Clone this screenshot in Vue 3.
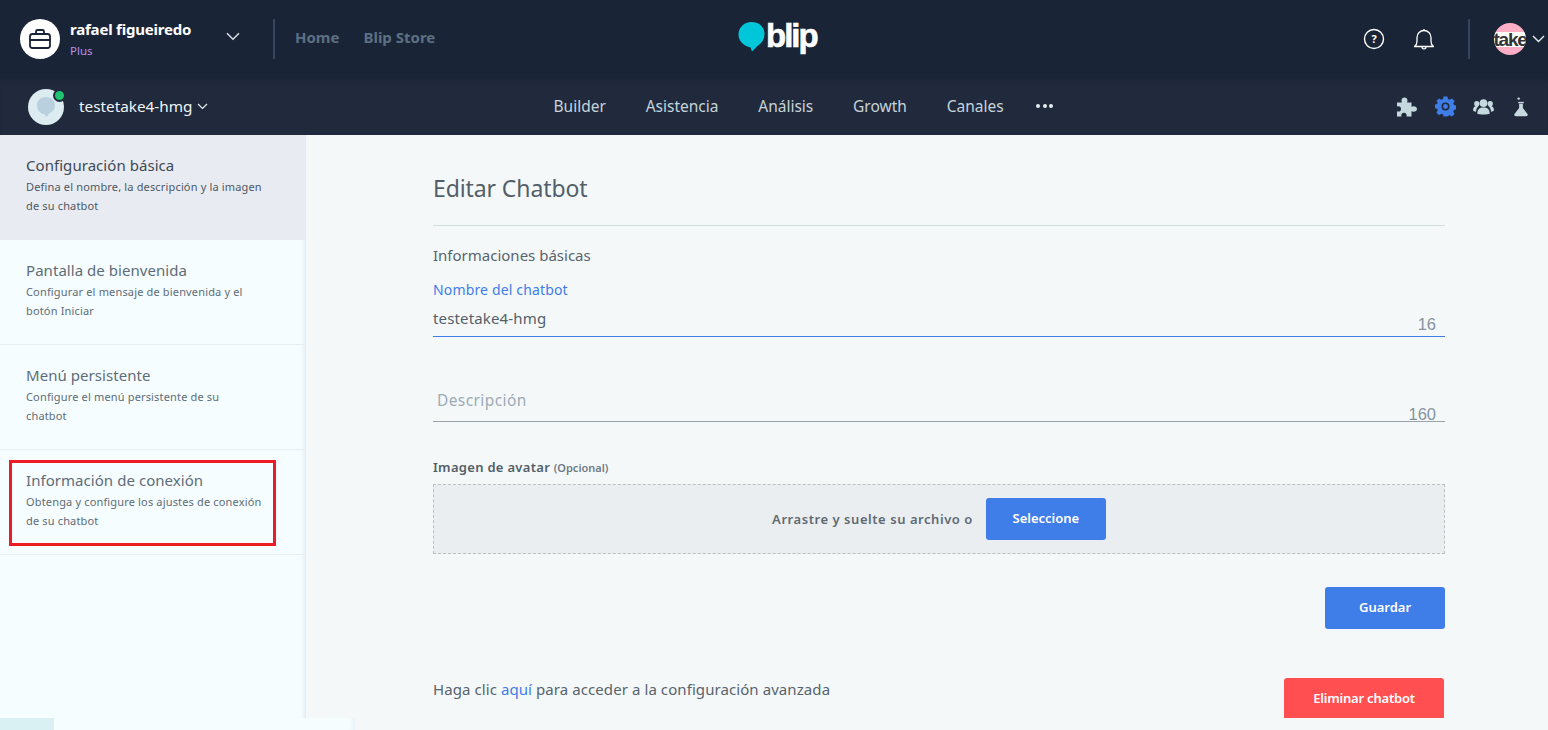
<script setup>
const items = [
  { t: 'Configuración básica', d: 'Defina el nombre, la descripción y la imagen\nde su chatbot', active: true },
  { t: 'Pantalla de bienvenida', d: 'Configurar el mensaje de bienvenida y el\nbotón Iniciar' },
  { t: 'Menú persistente', d: 'Configure el menú persistente de su\nchatbot' },
  { t: 'Información de conexión', d: 'Obtenga y configure los ajustes de conexión\nde su chatbot', marked: true }
]
const nav = ['Builder', 'Asistencia', 'Análisis', 'Growth', 'Canales']
</script>

<template>
  <div class="page">
    <header class="top">
      <div class="account">
        <div class="brief">
          <svg width="24" height="22" viewBox="0 0 24 22" fill="none" stroke="#1a2437" stroke-width="1.8" stroke-linejoin="round" stroke-linecap="round">
            <rect x="2" y="6" width="20" height="14" rx="2.5" />
            <path d="M8 6V3.5A1.5 1.5 0 0 1 9.5 2h5A1.5 1.5 0 0 1 16 3.5V6M2 12h20" />
          </svg>
        </div>
        <div class="who">
          <div class="name">rafael figueiredo</div>
          <div class="plan">Plus</div>
        </div>
        <svg class="acc-chev" width="14" height="9" viewBox="0 0 14 9" fill="none" stroke="#d5dde4" stroke-width="1.6"><path d="M1 1.2l6 6 6-6" /></svg>
      </div>
      <div class="vline"></div>
      <nav class="toplinks"><span>Home</span><span>Blip Store</span></nav>
      <div class="logo">
        <svg width="27" height="31" viewBox="0 0 27 31"><path d="M13.5 1C6 1 .5 6.500 .5 13.500S6 25 12.500 26.500L14 30.500 20 24.500C24 22 26.500 18 26.500 13C26.500 6 21 1 13.500 1Z" fill="#00c6d9" /></svg>
        <span class="logotext">blip</span>
      </div>
      <div class="tools">
        <svg width="22" height="22" viewBox="0 0 22 22" fill="none" stroke="#fff" stroke-width="1.4"><circle cx="11" cy="11" r="9.500" /><text x="11" y="15.200" text-anchor="middle" class="qmark">?</text></svg>
        <svg class="bell" width="22" height="22" viewBox="0 0 22 22" fill="none" stroke="#fff" stroke-width="1.3" stroke-linejoin="round"><path d="M1.500 18.500h19c-1.600-1.200-2.500-2.500-2.500-5V9.500a7 7 0 0 0-14 0v4c0 2.500-.9 3.800-2.500 5Z" /><path d="M9 19c0 2.500 4 2.500 4 0M11 2.500V1" /></svg>
        <div class="vline small"></div>
        <div class="avatar"><span>take</span></div>
        <svg class="chev" width="13" height="8" viewBox="0 0 13 8" fill="none" stroke="#e8edf1" stroke-width="1.4"><path d="M1 1l5.500 5.500L12 1" /></svg>
      </div>
    </header>

    <div class="sub">
      <div class="bot">
        <div class="botpic">
          <svg width="20" height="22" viewBox="0 0 20 22"><path d="M10 1C4.500 1 1 4.500 1 9.500S4.500 17.500 8.500 18.500L11 21 13 17.500C17 16 19 13 19 9.500 19 4.500 15.500 1 10 1Z" fill="#b9d1de" /></svg>
          <i class="dot"></i>
        </div>
        <span class="botname">testetake4-hmg</span>
        <svg width="11" height="7" viewBox="0 0 11 7" fill="none" stroke="#e8edf1" stroke-width="1.2"><path d="M1 1l4.500 4.500L10 1" /></svg>
      </div>
      <nav class="subnav">
        <span v-for="n in nav" :key="n">{{ n }}</span>
        <span class="dots"><i></i><i></i><i></i></span>
      </nav>
      <div class="subicons">
        <svg width="22" height="20" viewBox="0 0 22 20" fill="#c5d9de"><path d="M1 5.500h5C5 3.500 5.500 .5 8.500 .5S12 3.500 11 5.500h4.500v4.300c2-1 5.500-.6 5.500 2.200s-3.500 3.300-5.500 2.300v5.200H10.500c.8-2-.5-3.800-2.500-3.800s-3.300 1.800-2.500 3.800H1v-5.300c2 .9 4 0 4-2.300s-2-3.200-4-2.300Z" /></svg>
        <svg class="gear" width="21" height="21" viewBox="0 0 22 22"><path fill="#3f7de8" fill-rule="evenodd" d="M9 .5h4l.6 2.700 1.800.8L17.800 2.500l2.800 2.800-1.500 2.400.8 1.800 2.100.5v4l-2.100.6-.8 1.800 1.500 2.400-2.800 2.800-2.400-1.500-1.800.8L13 21.500H9l-.6-2.100-1.800-.8-2.400 1.500-2.800-2.800 1.500-2.400-.8-1.800L0 13V9l2.100-.5.800-1.800L1.400 5.300 4.200 2.500l2.400 1.500 1.800-.8ZM11 6.800a4.200 4.200 0 1 0 0 8.400 4.200 4.200 0 0 0 0-8.400Z" /><circle cx="11" cy="11" r="2.500" fill="#3f7de8" /></svg>
        <svg class="users" width="21" height="17" viewBox="0 0 22 17" fill="#c5d9de"><circle cx="11" cy="5" r="4" /><path d="M4.500 16c0-5 2.500-6.500 6.500-6.500s6.500 1.500 6.500 6.500c-2 1-11 1-13 0Z" /><circle cx="4" cy="5.500" r="2.800" /><circle cx="18" cy="5.500" r="2.800" /><path d="M0 12.500c0-3 1.500-4.500 4-4.500 .6 0 1.200.1 1.600.3C4 10 3.300 11.500 3.200 14 1.500 14 .3 13.300 0 12.500ZM22 12.500c0-3-1.500-4.500-4-4.500-.6 0-1.200.1-1.600.3C18 10 18.700 11.500 18.800 14c1.700 0 2.900-.7 3.200-1.500Z" /></svg>
        <svg class="flask" width="14" height="20" viewBox="0 0 15 21" fill="#c5d9de"><circle cx="5" cy="1.500" r="1.300" /><rect x="4.500" y="5" width="6" height="1.500" /><path d="M5.500 7h4v4.500L14.500 18c.6 1.200 0 2.500-1.500 2.500H2C.5 20.500-.1 19.200.5 18l5-6.500Z" /></svg>
      </div>
    </div>

    <div class="body">
      <aside class="side">
        <div v-for="it in items" :key="it.t" class="item" :class="{ active: it.active }">
          <div class="it-title">{{ it.t }}</div>
          <div class="it-desc">{{ it.d }}</div>
          <div v-if="it.marked" class="mark"></div>
        </div>
      </aside>
      <main class="main">
        <h1>Editar Chatbot</h1>
        <h2>Informaciones básicas</h2>
        <div class="field focus">
          <label>Nombre del chatbot</label>
          <div class="value">testetake4-hmg</div>
          <span class="count">16</span>
        </div>
        <div class="field desc">
          <div class="ph">Descripción</div>
          <span class="count">160</span>
        </div>
        <div class="av-label">Imagen de avatar <small>(Opcional)</small></div>
        <div class="drop">
          <span>Arrastre y suelte su archivo o</span>
          <button class="btn blue">Seleccione</button>
        </div>
        <div class="save"><button class="btn blue">Guardar</button></div>
        <div class="foot">
          <span class="adv">Haga clic <a>aquí</a> para acceder a la configuración avanzada</span>
          <button class="btn red">Eliminar chatbot</button>
        </div>
      </main>
    </div>
    <div class="strip"><i class="s1"></i><i class="s2"></i></div>
  </div>
</template>

<style>
html, body { margin: 0; background: #f5f8f9; }
</style>

<style scoped>
* { box-sizing: border-box; }
.page { width: 1548px; height: 730px; overflow: hidden; display: flex; flex-direction: column; background: #f5f8f9; font-family: "Noto Sans", "Open Sans", sans-serif; color: #52636c; }
.top { height: 78px; flex: none; background: #1a2437; display: flex; align-items: flex-start; padding-top: 19px; position: relative; }
.account { display: flex; align-items: flex-start; padding-left: 20px; width: 273px; height: 40px; }
.brief { width: 40px; height: 40px; border-radius: 50%; background: #fff; display: flex; align-items: center; justify-content: center; flex: none; }
.who { margin-left: 10px; width: 146px; }
.name { font-size: 15px; font-weight: 700; color: #fff; line-height: 21px; letter-spacing: -.2px; white-space: nowrap; }
.plan { font-size: 11.500px; color: #b98fe8; line-height: 20px; margin-top: 1px; }
.acc-chev { margin-left: 10px; margin-top: 13px; }
.vline { width: 2px; height: 40px; background: #35455f; flex: none; }
.vline.small { margin-left: 33px; }
.toplinks { display: flex; gap: 24px; margin-left: 20px; font-size: 15px; font-weight: 700; color: #5d7083; line-height: 37px; }
.logo { position: absolute; left: 738px; top: 21px; display: flex; align-items: center; }
.logotext { font-family: "Liberation Sans", sans-serif; font-weight: 700; font-size: 33px; line-height: 30px; letter-spacing: -2px; color: #fff; margin-left: 1px; margin-top: -1px; -webkit-text-stroke: .6px #fff; }
.tools { margin-left: auto; display: flex; align-items: center; height: 40px; padding-right: 3px; }
.qmark { font: 700 11px "Noto Sans", sans-serif; fill: #fff; stroke: none; }
.bell { margin-left: 28px; }
.avatar { width: 32px; height: 32px; border-radius: 50%; margin-left: 24px; background: linear-gradient(#ffaec5 0 9px, #fff 9px 24px, #ffaec5 24px); overflow: hidden; display: flex; align-items: center; justify-content: center; }
.avatar span { font: 700 19px/1 "Liberation Sans", sans-serif; color: #333; letter-spacing: -1.2px; white-space: nowrap; }
.tools .chev { margin-left: 6px; }
.sub { height: 57px; flex: none; background: #202a3c; display: flex; align-items: center; position: relative; box-shadow: inset 0 6px 6px -6px #161f30; }
.bot { display: flex; align-items: center; padding-left: 28px; }
.botpic { width: 36px; height: 36px; border-radius: 50%; background: #dcecf0; display: flex; align-items: center; justify-content: center; position: relative; }
.dot { position: absolute; right: -2px; top: 0; border-radius: 50%; background: #1ec46f; border: 2px solid #202a3c; box-sizing: content-box; width: 9px; height: 9px; }
.botname { font-size: 15.300px; color: #f1f4f6; margin-left: 15px; margin-right: 5px; line-height: 20px; padding-bottom: 2px; }
.subnav { position: absolute; left: 553.500px; top: -1px; height: 57px; display: flex; align-items: center; gap: 39.800px; font-size: 15.500px; color: #c6d3da; }
.dots { display: flex; gap: 2.500px; margin-left: -7px; margin-top: 1px; }
.dots i { width: 4px; height: 4px; border-radius: 50%; background: #e6ecef; }
.subicons { margin-left: auto; display: flex; align-items: center; padding-right: 20px; }
.gear { margin-left: 17px; }
.users { margin-left: 17px; }
.flask { margin-left: 20px; }
.body { flex: 1; min-height: 0; display: flex; background: #f5f8f9; }
.side { width: 306px; flex: none; background: #f5fdff; box-shadow: inset -5px 0 5px -4px rgba(150,165,190,.3); position: relative; }
.item { height: 105px; padding: 20px 26px 0; border-bottom: 1px solid #e9eef2; position: relative; }
.item.active { background: #e9ebf2; border-bottom: 0; }
.it-title { font-size: 15px; line-height: 20px; color: #5e6c78; letter-spacing: .05px; }
.active .it-title { color: #3d4a54; }
.it-desc { font-size: 11px; line-height: 19px; color: #5e6c78; margin-top: 2px; letter-spacing: .16px; white-space: pre-line; }
.active .it-desc { color: #4c5964; }
.mark { position: absolute; left: 9px; top: 10px; width: 267px; height: 86px; border: 3px solid #ed1c24; }
.main { flex: 1; padding: 0 103px 0 127px; min-width: 0; }
h1 { margin: 0; height: 91px; padding-top: 36px; font-size: 23px; line-height: 34px; font-weight: 400; color: #525f69; border-bottom: 1px solid #d2dde0; letter-spacing: -.1px; }
h2 { margin: 18px 0 0; font-size: 15px; line-height: 22px; font-weight: 400; color: #56646e; }
.field { position: relative; border-bottom: 1px solid #3f7de8; }
.focus { height: 56px; margin-top: 15px; }
.focus label { display: block; font-size: 14px; letter-spacing: .15px; line-height: 18px; color: #3f7de8; }
.value { font-size: 15px; letter-spacing: .15px; line-height: 20px; color: #525f69; margin-top: 9px; }
.count { position: absolute; right: 9px; bottom: 3px; font: 16.500px/18px "Liberation Sans", sans-serif; color: #8593a0; }
.desc { height: 85px; border-bottom-color: #99a3ac; }
.desc .count { bottom: -2px; }
.ph { position: absolute; left: 4px; top: 53px; font-size: 15.500px; letter-spacing: .4px; line-height: 20px; color: #9cabb6; }
.av-label { margin-top: 36px; font-size: 13px; letter-spacing: .3px; line-height: 18px; font-weight: 600; color: #525f69; }
.av-label small { font-size: 11px; letter-spacing: 0; color: #6e7b86; }
.drop { margin-top: 7px; height: 70px; background: #ebeef0; border: 1px dashed #bdbfc1; display: flex; align-items: center; justify-content: center; gap: 13px; font-size: 13px; letter-spacing: .55px; font-weight: 600; color: #5f6a73; }
.btn { width: 120px; height: 42px; border: 0; border-radius: 3px; color: #fff; font: 600 13px "Noto Sans", sans-serif; padding: 0 0 2px; }
.blue { background: #3f7de8; }
.save { margin-top: 33px; display: flex; justify-content: flex-end; }
.foot { margin-top: 49px; display: flex; justify-content: space-between; align-items: flex-start; padding-right: 1px; }
.adv { font-size: 15px; letter-spacing: .08px; line-height: 22px; color: #56646e; }
.adv a { color: #3f7de8; }
.red { background: #ff4f51; width: 160px; letter-spacing: -.2px; }
.strip { height: 12px; flex: none; display: flex; background: #f5f8f9; }
.s1 { width: 54px; background: #daf1f4; }
.s2 { width: 301px; background: #f5fdff; box-shadow: inset -5px 0 5px -4px rgba(150,165,190,.2); }
</style>
